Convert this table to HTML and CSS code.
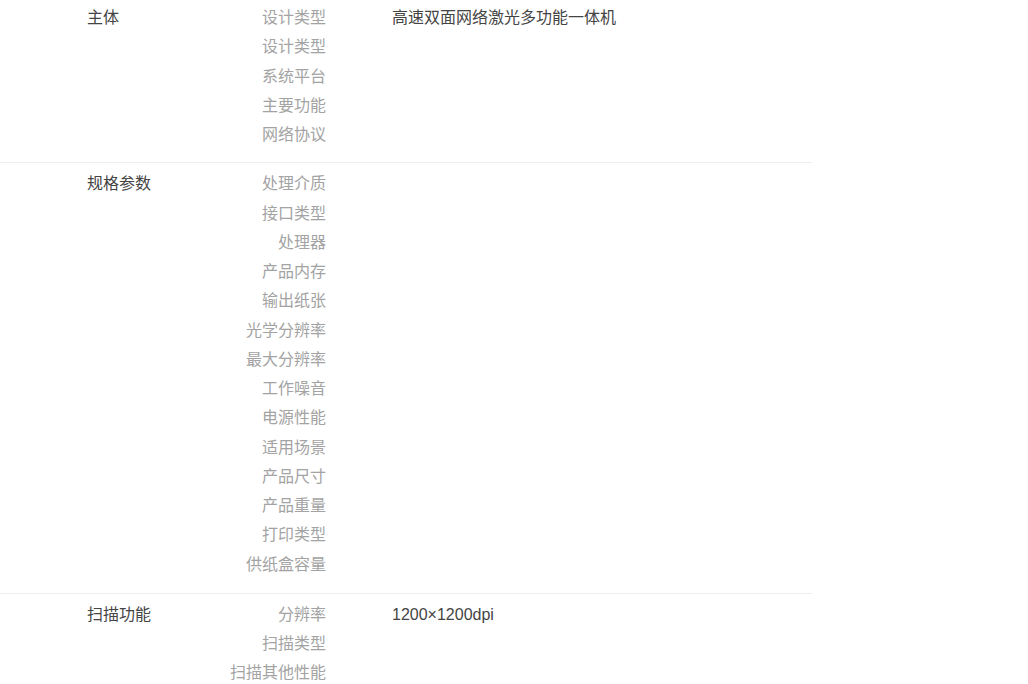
FILE: index.html
```html
<!DOCTYPE html>
<html lang="zh-CN">
<head>
<meta charset="UTF-8" />
<title>规格参数</title>
<link rel="stylesheet" href="styles.css">
</head>
<body>
  <div class="spec">
    <div class="spec-group first">
      <div class="group-title">主体</div>
      <dl class="spec-list">
        <div class="spec-row"><dt>设计类型</dt><dd>高速双面网络激光多功能一体机</dd></div>
        <div class="spec-row"><dt>设计类型</dt><dd></dd></div>
        <div class="spec-row"><dt>系统平台</dt><dd></dd></div>
        <div class="spec-row"><dt>主要功能</dt><dd></dd></div>
        <div class="spec-row"><dt>网络协议</dt><dd></dd></div>
      </dl>
    </div>

    <div class="spec-group">
      <div class="group-title">规格参数</div>
      <dl class="spec-list">
        <div class="spec-row"><dt>处理介质</dt><dd></dd></div>
        <div class="spec-row"><dt>接口类型</dt><dd></dd></div>
        <div class="spec-row"><dt>处理器</dt><dd></dd></div>
        <div class="spec-row"><dt>产品内存</dt><dd></dd></div>
        <div class="spec-row"><dt>输出纸张</dt><dd></dd></div>
        <div class="spec-row"><dt>光学分辨率</dt><dd></dd></div>
        <div class="spec-row"><dt>最大分辨率</dt><dd></dd></div>
        <div class="spec-row"><dt>工作噪音</dt><dd></dd></div>
        <div class="spec-row"><dt>电源性能</dt><dd></dd></div>
        <div class="spec-row"><dt>适用场景</dt><dd></dd></div>
        <div class="spec-row"><dt>产品尺寸</dt><dd></dd></div>
        <div class="spec-row"><dt>产品重量</dt><dd></dd></div>
        <div class="spec-row"><dt>打印类型</dt><dd></dd></div>
        <div class="spec-row"><dt>供纸盒容量</dt><dd></dd></div>
      </dl>
    </div>

    <div class="spec-group">
      <div class="group-title">扫描功能</div>
      <dl class="spec-list">
        <div class="spec-row"><dt>分辨率</dt><dd>1200×1200dpi</dd></div>
        <div class="spec-row"><dt>扫描类型</dt><dd></dd></div>
        <div class="spec-row"><dt>扫描其他性能</dt><dd></dd></div>
      </dl>
    </div>
  </div>
</body>
</html>
```

FILE: styles.css
```css
body {
  margin: 0;
  background: #fff;
  font-family: "Liberation Sans", "Noto Sans CJK SC", sans-serif;
  font-size: 16px;
  color: #333;
}

.spec {
  width: 812px;
}

.spec-group {
  display: flex;
  padding: 6px 0 14px 87px;
  border-top: 1px solid #eee;
}

.spec-group.first {
  padding-top: 3px;
  padding-bottom: 13px;
  border-top: none;
}

.group-title {
  width: 100px;
  line-height: 29.25px;
  color: #444;
}

.spec-list {
  margin: 0;
}

.spec-row {
  display: flex;
  line-height: 29.25px;
}

.spec-row dt {
  width: 139px;
  text-align: right;
  color: #a3a3a3;
}

.spec-row dd {
  margin: 0 0 0 66px;
  color: #444;
}
```
